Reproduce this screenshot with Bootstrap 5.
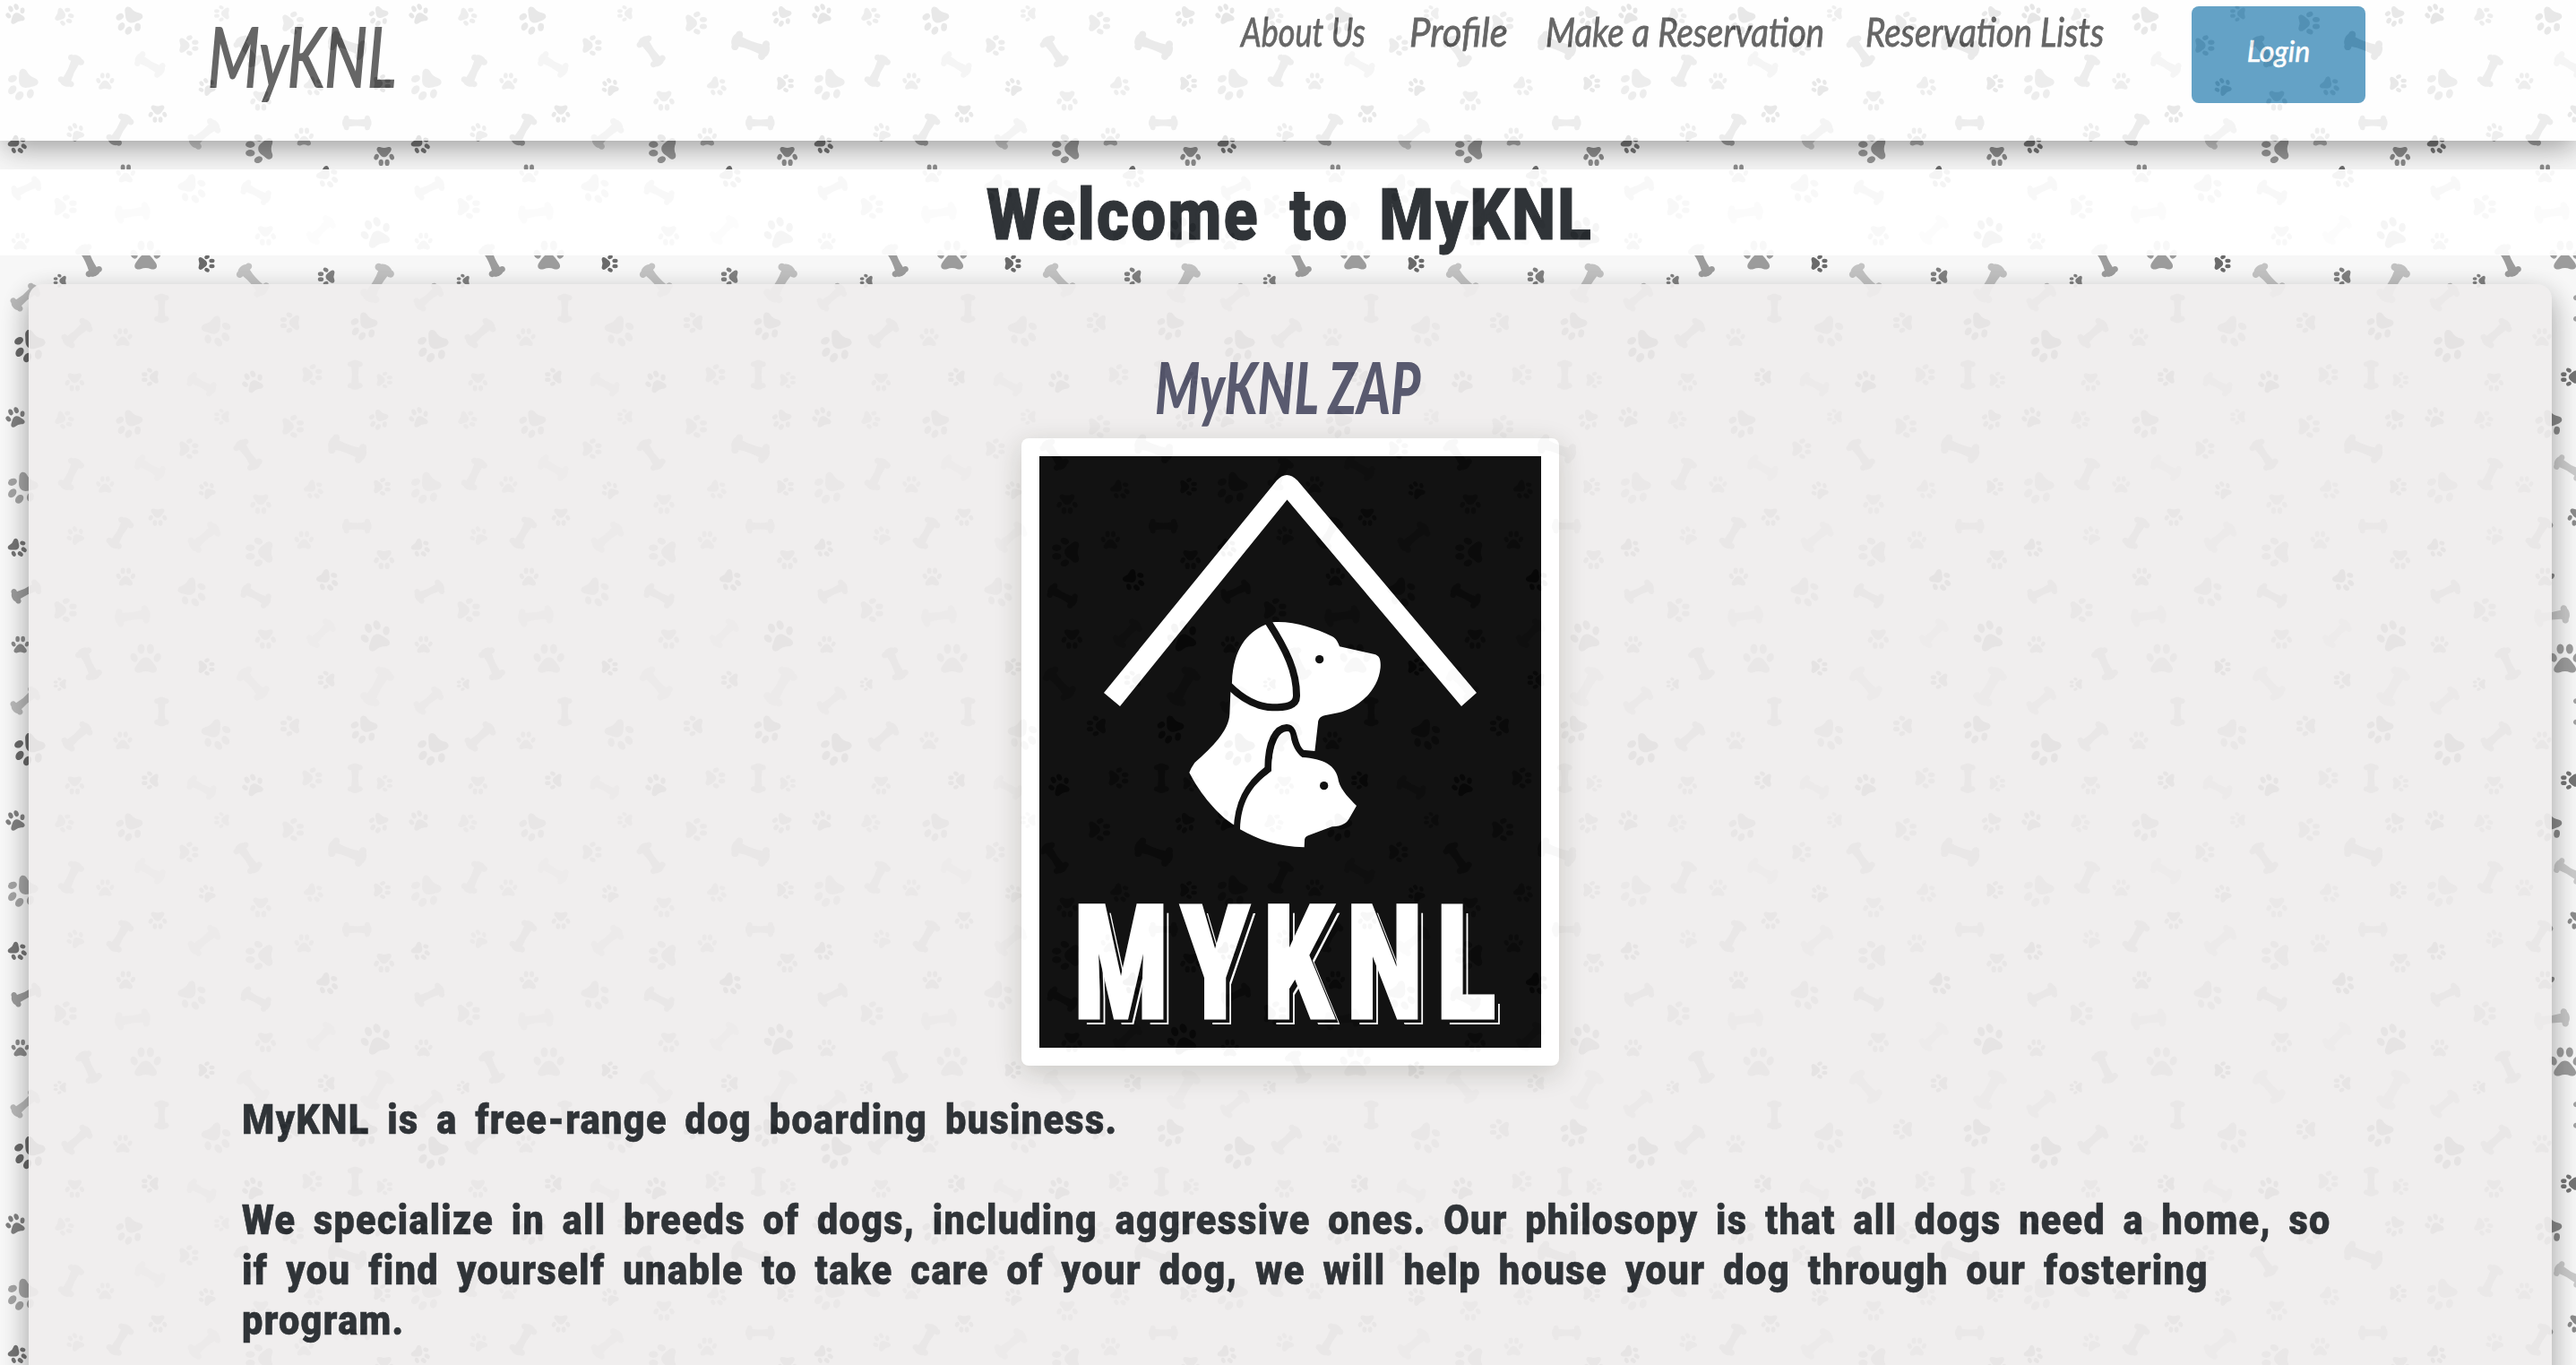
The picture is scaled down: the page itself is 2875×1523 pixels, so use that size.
<!DOCTYPE html>
<html lang="en">
<head>
<meta charset="utf-8">
<title>MyKNL</title>
<link href="https://cdn.jsdelivr.net/npm/bootstrap@5.3.0/dist/css/bootstrap.min.css" rel="stylesheet">
<style>
html{overflow:hidden}
body{width:2880px;height:1523px;overflow:hidden;background:#f7f7f7;font-family:Roboto,"Open Sans",sans-serif}
.paper{position:absolute;inset:0;z-index:-1;width:2880px;height:1523px}
.script{font-family:Lato,sans-serif;font-style:italic;white-space:nowrap}
.script span,.fit{display:inline-block;transform-origin:0 50%;white-space:nowrap}
.topbar{height:157px;background:#fff;opacity:.8;padding:0 235px 0 232px!important;box-shadow:0 12px 32px -6px rgba(0,0,0,.5)}
.logo-word{color:#424242;font-size:92px;line-height:110px;margin-top:7px;width:210px;-webkit-text-stroke:2px #424242}
.logo-word span{transform:scaleX(.73)}
.topbar .links a{color:#424242;font-size:45px;line-height:60px;text-decoration:none;display:block;margin-top:5px;-webkit-text-stroke:.8px #424242}
.l1{transform:scaleX(.8)}
.l2{transform:scaleX(.93)}
.l3,.l4{transform:scaleX(.853)}
.login-btn{width:194px;height:108px;margin:7px 5px 0 99px;background:#3f8db9;color:#fff;border-radius:8px;font-size:32px;line-height:100px;padding:0 0 8px;border:0;-webkit-text-stroke:.6px #fff}
.hello{height:96px;margin:32px 0;background:#fff;opacity:.93;overflow:hidden}
.hello h1{font-size:79px;font-weight:900;line-height:96px;margin:3px 0 0;color:#212529;letter-spacing:2.6px;word-spacing:16px}
.hello h1 span{display:inline-block;transform:scaleX(.878);-webkit-text-stroke:1px #212529}
.board{margin:0 32px;height:1300px;background:#efeded;opacity:.93;border-radius:16px;box-shadow:0 12px 32px rgba(0,0,0,.4);padding:72px 0 0 238px}
.board h2{font-size:80px;font-weight:900;line-height:84px;height:100px;color:#4d4e65;width:300px;margin:0 0 0 1019px}
.board h2 span{transform:scaleX(.71)}
.frame{width:600px;height:700px;margin-left:870px;padding:20px;background:#fff;border-radius:8px;box-shadow:0 8px 30px rgba(40,40,20,.2)}
.frame svg{display:block}
.logo-caption{position:absolute;left:59px;top:497px;font-size:175px;font-weight:900;line-height:180px;letter-spacing:25px;color:#fff;white-space:nowrap;transform:scaleX(.68);transform-origin:0 0;-webkit-text-stroke:5px #fff;text-shadow:8.500px 6px 0 #000,11px 7.500px 0 #fff}
.copy{font-size:46px;font-weight:900;line-height:56px;color:#212529;padding-top:32px;letter-spacing:1.5px;word-spacing:9px}
.copy p{margin:0 0 56px}
.copy .fit{display:table;transform:scaleX(.9);-webkit-text-stroke:.6px #212529}
.copy .fit.first-line{transform:scaleX(.8965)}
.copy .fit.mid-line{transform:scaleX(.905)}
</style>
<script src="https://cdn.jsdelivr.net/npm/bootstrap@5.3.0/dist/js/bootstrap.bundle.min.js"></script>
</head>
<body>
<svg class="paper" aria-hidden="true">
 <defs>
  <g id="paw"><path d="M0-.5C3-.5 4 2 6.500 5C9 8.500 6 10.500 3.500 9.500Q0 8-3.500 9.500C-6 10.500-9 8.500-6.500 5C-4 2-3-.5 0-.5Z"/><ellipse cx="-7.800" cy="-.4" rx="2.300" ry="3.100" transform="rotate(-25 -7.800 -.4)"/><ellipse cx="-3.100" cy="-6.200" rx="2.400" ry="3.300"/><ellipse cx="3.100" cy="-6.200" rx="2.400" ry="3.300"/><ellipse cx="7.800" cy="-.4" rx="2.300" ry="3.100" transform="rotate(25 7.800 -.4)"/></g>
  <path id="bone" d="M-5.500-2.600Q0-1.700 5.500-2.600C5-6 9.300-6 9.200-3C10.500-1.500 10.500 1.500 9.200 3C9.300 6 5 6 5.500 2.600Q0 1.700-5.500 2.600C-5 6-9.300 6-9.200 3C-10.500 1.500-10.500-1.500-9.200-3C-9.300-6-5-6-5.500-2.600Z"/>
  <pattern id="tile" width="450" height="450" patternUnits="userSpaceOnUse"><g id="prints" transform="scale(.33333)"></g></pattern>
 </defs>
 <rect width="2880" height="1523" fill="url(#tile)"/>
</svg>

<nav class="topbar d-flex align-items-start">
 <a class="logo-word script text-decoration-none"><span>MyKNL</span></a>
 <div class="links d-flex script ms-auto">
  <a style="width:188px"><span class="l1">About Us</span></a>
  <a style="width:152px"><span class="l2">Profile</span></a>
  <a style="width:357px"><span class="l3">Make a Reservation</span></a>
  <a style="width:265px"><span class="l4">Reservation Lists</span></a>
 </div>
 <button class="login-btn btn script">Login</button>
</nav>

<header class="hello text-center"><h1><span>Welcome to MyKNL</span></h1></header>

<main class="board">
 <h2 class="script"><span>MyKNL ZAP</span></h2>
 <div class="frame position-relative">
  <svg width="560" height="660" viewBox="1160 509 560 660">
   <rect x="1160" y="509" width="560" height="660" fill="#000"/>
   <path fill="#fff" d="M1232 773L1425 536Q1436 524 1448 536L1648 773L1631 788L1436.500 557.500L1250 788Z"/>
   <g transform="translate(1310 680) scale(.33333)">
    <path fill="#fff" d="M305 52L332 43C400 38 470 62 530 90C545 98 550 110 555 124L672 150C688 155 694 165 692 195C685 270 620 330 550 346L505 355C490 358 484 368 483 380L472 476L430 490L300 650L203 722C150 690 90 620 52 546Q58 530 70 513C130 460 185 405 187 350L190 280L195 243C200 130 245 80 305 52Z"/>
    <path fill="none" stroke="#000" stroke-width="24" d="M314 38C380 140 412 210 411 290C411 325 370 328 330 328C270 326 225 295 184 254M212 740C215 650 245 590 316 534C316 440 345 397 378 396C410 397 395 460 430 482L480 487"/>
    <path fill="#fff" d="M222 736C225 650 255 590 327 543C328 480 340 430 375 410C385 405 390 410 392 425C395 450 410 480 430 495C500 500 545 520 552 575C560 605 590 635 612 657L590 695C580 715 565 725 530 727L450 757Q437 762 438 775L437 796C350 795 280 770 222 736Z"/>
    <circle cx="488" cy="167" r="14"/><circle cx="503" cy="590" r="14"/>
   </g>
  </svg>
  <div class="logo-caption">MYKNL</div>
 </div>
 <div class="copy">
  <p><span class="fit">MyKNL is a free-range dog boarding business.</span></p>
  <p><span class="fit first-line">We specialize in all breeds of dogs, including aggressive ones. Our philosopy is that all dogs need a home, so</span>
  <span class="fit mid-line">if you find yourself unable to take care of your dog, we will help house your dog through our fostering</span>
  <span class="fit">program.</span></p>
 </div>
</main>
<script>
// Wallpaper motifs: centre x, centre y, length, rotation, opacity
var paws=[[52,45,64,-20,.55],[217,55,60,110,.38],[432,72,88,-150,.5],[742,45,52,-90,.33],[982,77,74,90,.4],[1267,57,64,-150,.5],[633,152,66,90,.4],[73,287,100,-140,.38],[352,271,58,0,.35],[692,289,56,-35,.5],[873,338,68,180,.35],[1052,290,62,130,.35],[1280,279,58,90,.5],[528,382,60,180,.5],[252,441,58,-30,.35],[60,485,60,130,.6],[867,498,94,-90,.45],[1018,457,62,0,.35],[1286,524,66,180,.5],[421,580,62,0,.5],[1098,594,70,135,.65],[646,635,92,140,.4],[220,692,78,90,.4],[68,807,58,0,.5],[488,853,100,0,.42],[889,790,68,180,.4],[1258,776,98,-20,.6],[692,882,56,90,.65],[200,940,44,-90,.55],[1092,926,58,-90,.55],[970,1080,66,-90,.5],[1217,1095,88,-145,.6],[726,1112,96,145,.45],[411,1128,62,0,.4],[97,1162,102,-145,.65],[250,1280,62,180,.45],[502,1262,58,-90,.6],[846,1276,70,-25,.6],[1046,1254,68,90,.4],[1288,1272,54,90,.4]];
var bones=[[830,172,110,55,.4],[1163,152,130,20,.45],[238,237,110,-65,.38],[502,216,105,30,.2],[402,434,110,-60,.4],[684,448,115,-40,.22],[1195,411,96,0,.38],[88,630,102,-25,.42],[444,712,118,-8,.22],[857,644,104,28,.4],[297,872,112,65,.42],[1075,770,105,-45,.2],[847,938,120,48,.24],[1263,948,135,-60,.25],[85,995,105,-40,.28],[541,1032,96,90,.4],[258,1115,110,-42,.42],[675,1286,100,28,.25],[1189,1255,98,90,.4]];
function stamp(id){return function(m){return '<use href="#'+id+'" fill-opacity="'+(m[4]*.88)+'" transform="translate('+m[0]+' '+m[1]+') rotate('+m[3]+') scale('+m[2]/20+')"/>'}}
document.getElementById('prints').innerHTML=paws.map(stamp('paw')).join('')+bones.map(stamp('bone')).join('');
</script>
</body>
</html>
